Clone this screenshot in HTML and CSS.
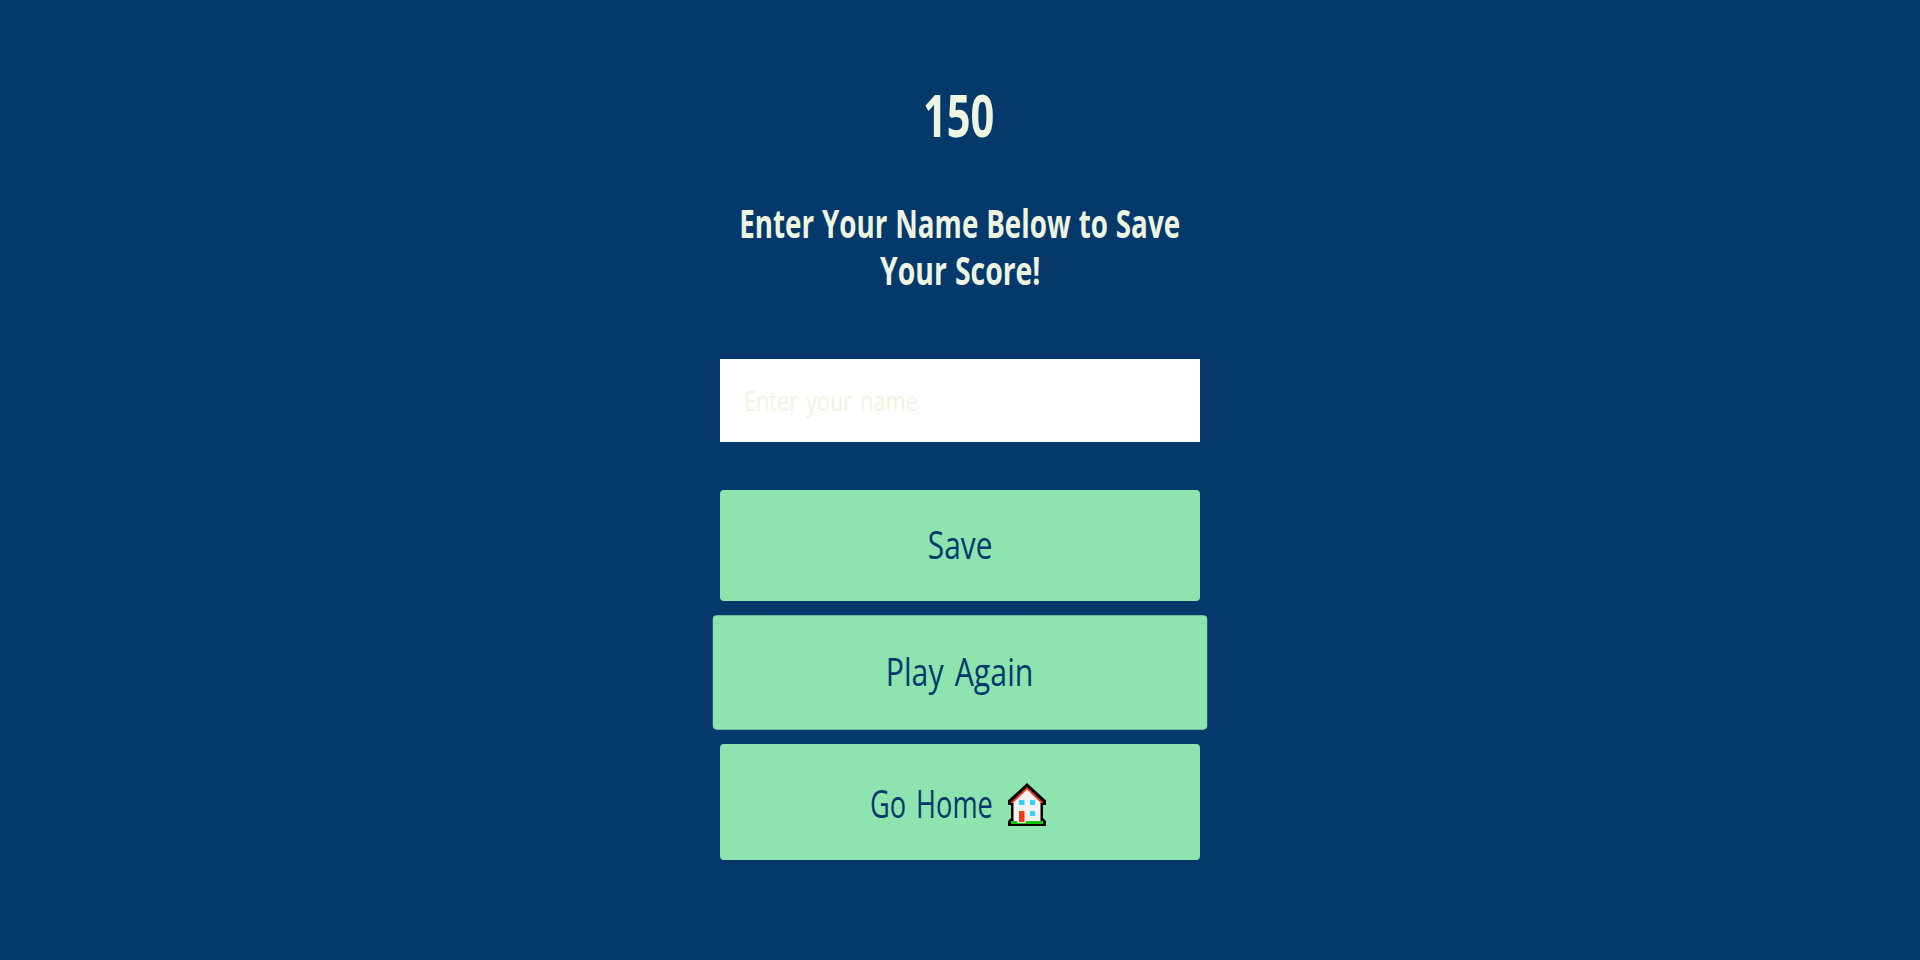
FILE: index.html
```html
<!DOCTYPE html>
<html lang="en">
<head>
<meta charset="utf-8">
<title>Save Your Score</title>
<link rel="stylesheet" href="styles.css">
</head>
<body>
<main class="end">
  <h1 class="score"><span class="narrow narrow-score">150</span></h1>
  <form class="form">
    <h2 class="prompt"><span class="narrow narrow-one">Enter Your Name Below to Save</span><span class="narrow narrow-two">Your Score!</span></h2>
    <label class="field"><span class="narrow narrow-field">Enter your name</span></label>
    <button class="btn btn-save" type="button"><span class="narrow narrow-save">Save</span></button>
  </form>
  <a class="btn btn-play"><span class="narrow narrow-play">Play Again</span></a>
  <a class="btn btn-home"><span class="narrow narrow-home">Go Home</span>
    <svg class="house" viewBox="0 0 38 43">
      <path fill="#000" d="M19 0L38 17.500V22H35V35L38 38V43H0V38L3 35V22H0V17.500Z"/>
      <path fill="#f03a17" d="M19 4L35 19V20H32L19 9L6 20H3V19Z"/>
      <path fill="#f2f2f2" d="M19 6.500L32.500 19.500V38H5.500V19.500Z"/>
      <path fill="#16c60c" d="M3 38H35V41H3Z"/>
      <path fill="#f2f2f2" d="M9 37H18V40H9Z"/>
      <path fill="#31d2f7" d="M11 17H16.500V22H11ZM22 17H27V22H22ZM22 28H27V33H22Z"/>
      <path fill="#f03a17" d="M11 28H16.500V39H11Z"/>
    </svg>
  </a>
</main>
</body>
</html>
```

FILE: styles.css
```css
* { box-sizing: border-box; }
body {
  margin: 0;
  min-height: 960px;
  background: #05386b;
  color: #edf5e1;
  font-family: "Open Sans", "Noto Sans", sans-serif;
}
.end {
  width: 480px;
  margin: 0 auto;
  padding-top: 79px;
  display: flex;
  flex-direction: column;
}
.narrow { display: block; white-space: nowrap; width: max-content; }
.score {
  margin: 0 0 50px;
  padding-right: 3px;
  display: flex;
  justify-content: center;
  font-size: 59px;
  line-height: 70px;
  font-weight: 700;
}
.form { display: flex; flex-direction: column; }
.prompt {
  margin: 0 0 66px;
  display: flex;
  flex-direction: column;
  align-items: center;
  font-size: 39px;
  line-height: 47px;
  font-weight: 700;
  word-spacing: 1px;
}
.field {
  height: 83px;
  margin-bottom: 48px;
  padding: 0 24px 2px;
  display: flex;
  align-items: center;
  background: #fff;
  font-size: 28px;
  word-spacing: 3px;
}
.btn {
  height: 111px;
  margin-bottom: 16px;
  padding: 0 0 3px;
  display: flex;
  align-items: center;
  justify-content: center;
  border: 0;
  border-radius: 4px;
  background: #8ee4af;
  color: #05386b;
  font-family: inherit;
  font-size: 38px;
  font-weight: 400;
  line-height: 52px;
  word-spacing: 4px;
}
.btn-play { transform: scale(1.03); }
.btn-home { height: 116px; margin: 0; padding: 2px 4px 0 0; }
.house { width: 38px; height: 43px; margin: 2px 0 0 15px; }
.narrow-score { transform: scaleX(0.705); }
.narrow-one { transform: scaleX(0.712); }
.narrow-two { transform: scaleX(0.727); }
.narrow-field { transform: scaleX(0.775); transform-origin: left; }
.narrow-save { transform: scaleX(0.785); }
.narrow-play { transform: scaleX(0.775); }
.narrow-home { width: 123px; transform: scaleX(0.715); transform-origin: left; }
```
